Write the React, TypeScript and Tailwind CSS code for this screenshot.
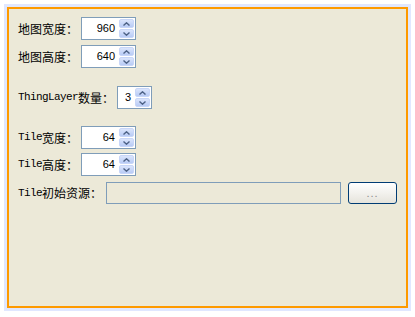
import React from 'react';

const cjk = { fontFamily: '"Noto Sans CJK SC", "Liberation Sans", sans-serif' };
const mono = { fontFamily: '"Liberation Mono", "DejaVu Sans Mono", monospace' };

const SpinBox: React.FC<{ value: string; width: string }> = ({ value, width }) => (
  <div className={`flex h-[23px] ${width} border border-[#7f9db9] bg-white`}>
    <div
      className="flex-1 flex items-center justify-end pr-[3px] text-[11px] text-black"
      style={{ fontFamily: '"Liberation Sans", sans-serif' }}
    >
      {value}
    </div>
    <div className="flex flex-col w-[17px] p-px gap-px">
      <div className="flex-1 flex items-center justify-center rounded-[2px] bg-gradient-to-b from-[#dbe5fc] to-[#b8cbf5] border border-[#c8d6f8]">
        <svg width="7" height="4" viewBox="0 0 7 4">
          <path d="M0.5 3.5 L3.5 0.8 L6.5 3.5" fill="none" stroke="#4d6185" strokeWidth="1.4" />
        </svg>
      </div>
      <div className="flex-1 flex items-center justify-center rounded-[2px] bg-gradient-to-b from-[#dbe5fc] to-[#b8cbf5] border border-[#c8d6f8]">
        <svg width="7" height="4" viewBox="0 0 7 4">
          <path d="M0.5 0.5 L3.5 3.2 L6.5 0.5" fill="none" stroke="#4d6185" strokeWidth="1.4" />
        </svg>
      </div>
    </div>
  </div>
);

const Label: React.FC<{ latin?: string; cn: string; width: string }> = ({ latin, cn, width }) => (
  <div className={`${width} shrink-0 flex items-center text-black leading-none`}>
    {latin && (
      <span className="text-[11px] tracking-[-0.6px]" style={mono}>
        {latin}
      </span>
    )}
    <span className="text-[12px]" style={cjk}>
      {cn}：
    </span>
  </div>
);

export default function App() {
  return (
    <div className="w-[415px] h-[317px] bg-white pl-[4px] pt-[4px]">
      <div className="w-[407px] h-[307px] bg-indigo-100 p-[3px]">
        <div className="w-[401px] h-[301px] bg-amber-500 p-[2px]">
          <div className="w-[397px] h-[297px] bg-[#ece9d8] pl-[9px] pt-[8px]">
            <div className="flex items-center h-[23px]">
              <Label cn="地图宽度" width="w-[63px]" />
              <SpinBox value="960" width="w-[55px]" />
            </div>
            <div className="flex items-center h-[23px] mt-[5px]">
              <Label cn="地图高度" width="w-[63px]" />
              <SpinBox value="640" width="w-[55px]" />
            </div>
            <div className="flex items-center h-[23px] mt-[18px]">
              <Label latin="ThingLayer" cn="数量" width="w-[99px]" />
              <SpinBox value="3" width="w-[35px]" />
            </div>
            <div className="flex items-center h-[23px] mt-[17px]">
              <Label latin="Tile" cn="宽度" width="w-[63px]" />
              <SpinBox value="64" width="w-[55px]" />
            </div>
            <div className="flex items-center h-[23px] mt-[4px]">
              <Label latin="Tile" cn="高度" width="w-[63px]" />
              <SpinBox value="64" width="w-[55px]" />
            </div>
            <div className="flex items-center h-[22px] mt-[6px]">
              <Label latin="Tile" cn="初始资源" width="w-[88px]" />
              <div className="w-[235px] h-[22px] border border-[#7f9db9] bg-[#ece9d8]" />
              <button
                className="ml-[7px] w-[49px] h-[22px] rounded-[3px] border border-[#003c74] bg-gradient-to-b from-white to-[#e6e4dc] text-[11px] text-[#8a8a8a] leading-none tracking-[1px]"
                style={{ fontFamily: '"Liberation Sans", sans-serif' }}
              >
                ...
              </button>
            </div>
          </div>
        </div>
      </div>
    </div>
  );
}
